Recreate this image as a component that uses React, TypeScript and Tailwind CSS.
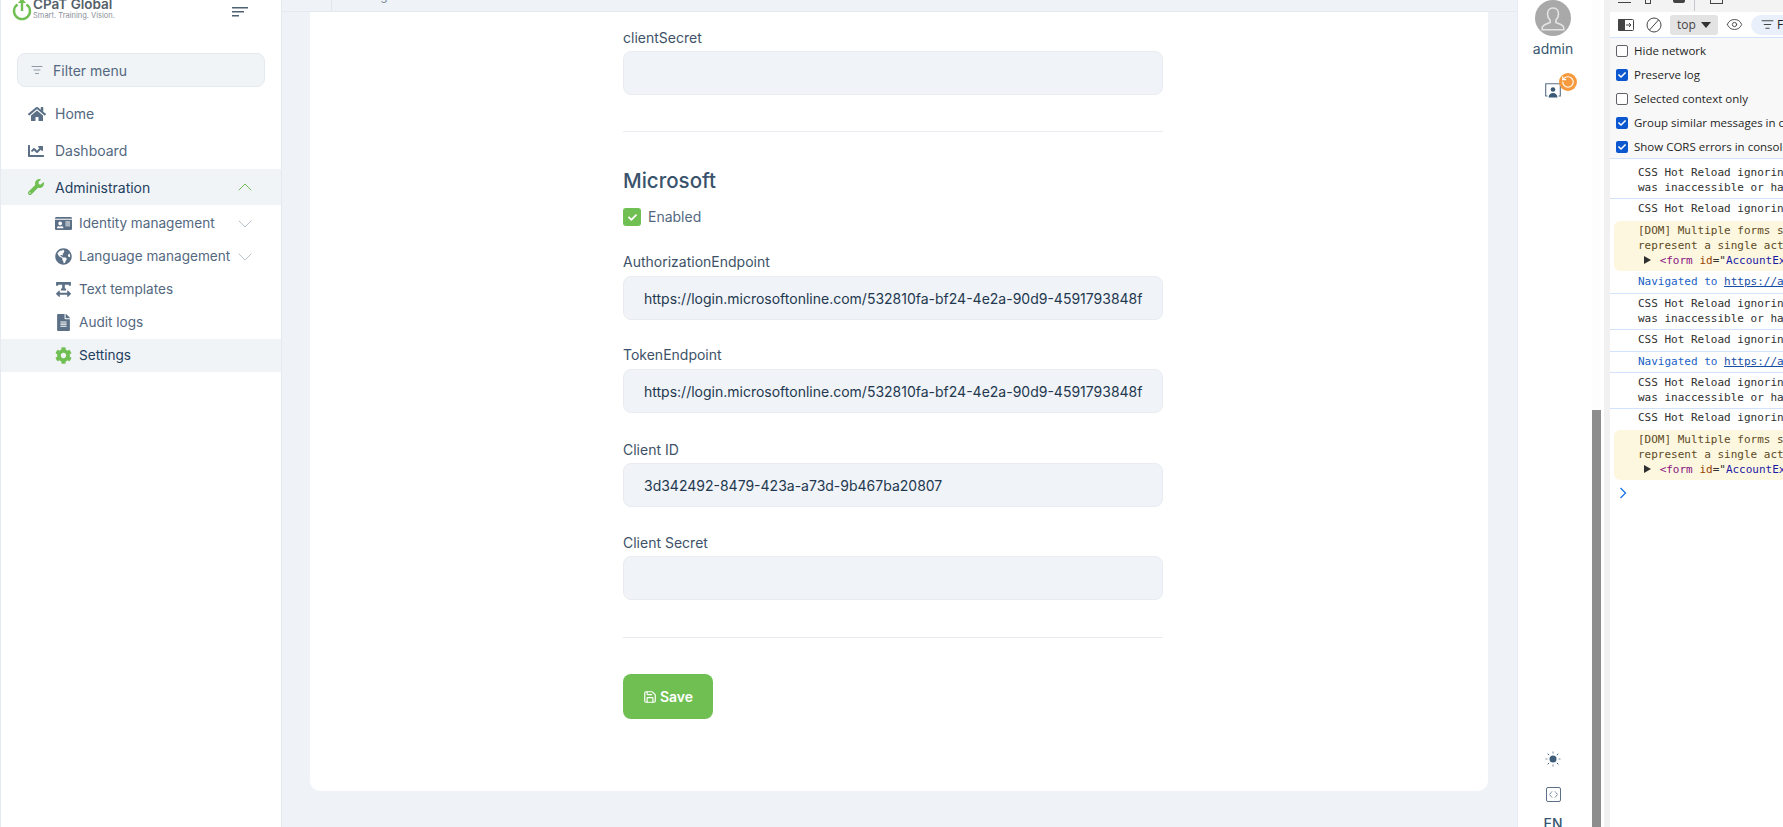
import { ChevronDown, ChevronUp, Eye, ListFilter, RotateCcw, Save } from "lucide-react";
import type { ComponentType, ReactNode } from "react";
import {
  FaChartLine,
  FaCheck,
  FaCog,
  FaFileAlt,
  FaGlobeAmericas,
  FaHome,
  FaIdCard,
  FaTextWidth,
  FaWrench,
} from "react-icons/fa";

const URL_VALUE =
  "https://login.microsoftonline.com/532810fa-bf24-4e2a-90d9-4591793848f";

const SubItem = ({
  icon: Icon,
  label,
  chevron,
  active,
}: {
  icon: ComponentType<{ className?: string }>;
  label: string;
  chevron?: boolean;
  active?: boolean;
}) => (
  <div
    className={`flex h-[33px] items-center pl-[54px] pr-[24px] ${active ? "bg-[#f1f4f7] text-[#23405f]" : "text-[#53687f]"}`}
  >
    <span className="flex w-[24px] justify-start">
      <Icon className={`h-[17px] w-[17px] ${active ? "text-[#70bf53]" : "text-[#5b7086]"}`} />
    </span>
    <span className="text-[13.6px] whitespace-nowrap">{label}</span>
    {chevron && <ChevronDown className="ml-auto h-[24px] w-[24px] shrink-0 text-[#b9c3ce]" strokeWidth={1} />}
  </div>
);

const Sidebar = () => (
  <aside className="w-[282px] shrink-0 border-x border-[#e5eaf0] bg-white">
    <div className="flex h-[24px] items-start overflow-hidden pl-[11px] pr-[33px]">
      <svg width="20" height="22" viewBox="0 0 20 22" className="mt-[-1px] shrink-0" fill="none" stroke="#70bf53">
        <path d="M5.5 5.5a8 8 0 1 0 9 0" strokeWidth="2.4" />
        <path d="M10 1v11" strokeWidth="2.4" />
        <path d="M6.5 4 10 0l3.5 4" fill="#70bf53" strokeWidth="1" />
      </svg>
      <div className="ml-[1px] mt-[-4px] font-['Inter',sans-serif]">
        <div className="text-[13.5px] leading-[16px] font-semibold text-[#555f69]">CPaT Global</div>
        <div className="mt-[-1px] text-[7.5px] leading-[10px] text-[#8a9199]">Smart. Training. Vision.</div>
      </div>
      <svg width="16" height="12" viewBox="0 0 16 12" className="ml-auto mt-[6px] shrink-0">
        <rect x="0" y="1" width="16" height="1.5" fill="#4e6074" />
        <rect x="0" y="5" width="12" height="1.5" fill="#4e6074" />
        <rect x="0" y="9" width="7" height="1.5" fill="#4e6074" />
      </svg>
    </div>

    <div className="mx-[16px] mt-[29px] flex h-[34px] items-center rounded-[8px] border border-[#e5eaf0] bg-[#f1f4f7] pl-[13px] text-[14px] text-[#53687f]">
      <ListFilter className="h-[12px] w-[12px] text-[#6b7d90]" strokeWidth={1.5} />
      <span className="ml-[10px]">Filter menu</span>
    </div>

    <nav className="mt-[8px]">
      <div className="flex h-[37px] items-center pl-[27px] text-[14px] text-[#53687f]">
        <span className="w-[27px]">
          <FaHome className="h-[18px] w-[18px] text-[#5b7086]" />
        </span>
        Home
      </div>
      <div className="flex h-[37px] items-center pl-[27px] text-[14px] text-[#53687f]">
        <span className="w-[27px]">
          <FaChartLine className="h-[16px] w-[16px] text-[#5b7086]" />
        </span>
        Dashboard
      </div>
      <div className="flex h-[36px] items-center bg-[#f1f4f7] pl-[27px] pr-[24px] text-[14px] text-[#23405f]">
        <span className="w-[27px]">
          <FaWrench className="h-[16px] w-[16px] text-[#70bf53]" />
        </span>
        Administration
        <ChevronUp className="ml-auto h-[24px] w-[24px] text-[#70bf53]" strokeWidth={1} />
      </div>
      <div className="pt-[2px]">
        <SubItem icon={FaIdCard} label="Identity management" chevron />
        <SubItem icon={FaGlobeAmericas} label="Language management" chevron />
        <SubItem icon={FaTextWidth} label="Text templates" />
        <SubItem icon={FaFileAlt} label="Audit logs" />
        <SubItem icon={FaCog} label="Settings" active />
      </div>
    </nav>
  </aside>
);

const Field = ({
  label,
  value,
  className,
  gap = "mt-[5px]",
}: {
  label: string;
  value?: string;
  className?: string;
  gap?: string;
}) => (
  <div className={className}>
    <div className="text-[14px] leading-[17px] text-[#3d5268]">{label}</div>
    <div
      className={`${gap} flex h-[44px] items-center overflow-hidden rounded-[8px] border border-[#e8ecf1] bg-[#f0f3f7] pl-[20px] text-[14px] whitespace-nowrap text-[#23384f]`}
    >
      {value}
    </div>
  </div>
);

const Main = () => (
  <main className="flex min-w-0 flex-1 flex-col bg-[#eff3f7]">
    <div className="flex h-[12px] shrink-0 overflow-hidden border-b border-[#e5eaf0] pl-[28px]">
      <div className="h-full w-[22px] border-r border-[#e1e6ec]" />
      <span className="mt-[-11px] pl-[16px] text-[12px] leading-[14px] text-[#7b8a9a]">Settings</span>
    </div>
    <div className="ml-[28px] mr-[29px] h-[779px] shrink-0 rounded-b-[10px] bg-white pl-[313px]">
      <div className="w-[540px]">
        <Field label="clientSecret" className="pt-[17px]" />
        <hr className="mt-[36px] border-[#e8ebef]" />
        <h2 className="mt-[35px] text-[20.5px] leading-[28px] font-medium text-[#3a536c]">Microsoft</h2>
        <div className="mt-[13px] flex items-center">
          <span className="flex h-[18px] w-[18px] items-center justify-center rounded-[3px] bg-[#70bf53]">
            <FaCheck className="h-[9px] w-[9px] text-white" />
          </span>
          <span className="ml-[7px] text-[14px] leading-[18px] text-[#53687f]">Enabled</span>
        </div>
        <Field label="AuthorizationEndpoint" value={URL_VALUE} className="mt-[27px]" gap="mt-[6px]" />
        <Field label="TokenEndpoint" value={URL_VALUE} className="mt-[26px]" gap="mt-[6px]" />
        <Field label="Client ID" value="3d342492-8479-423a-a73d-9b467ba20807" className="mt-[28px]" />
        <Field label="Client Secret" className="mt-[27px]" />
        <hr className="mt-[37px] border-[#e8ebef]" />
        <button className="mt-[36px] flex h-[45px] w-[90px] items-center justify-center gap-[3px] rounded-[8px] bg-[#70bf53] text-[14px] font-semibold text-white">
          <Save className="h-[14px] w-[14px]" strokeWidth={2} />
          Save
        </button>
      </div>
    </div>
  </main>
);

const RightBar = () => (
  <div className="flex w-[75px] shrink-0 flex-col items-center border-l border-[#e6ebf5] bg-white pr-[4px]">
    <div className="flex h-[36px] w-[36px] shrink-0 items-end justify-center overflow-hidden rounded-full bg-[#a9a9a9]">
      <svg width="26" height="28" viewBox="0 0 26 28" fill="none" stroke="#e4e4e4" strokeWidth="1.6" className="mb-[3px]">
        <path d="M13 3c-3.6 0-5.500 2.700-5.500 6 0 2.600 1 4.600 2.600 6v2.500c-2.500 1-6.600 2.200-7.600 4.300-.4 1-.3 2.200-.3 3h21.600c0-.8.1-2-.3-3-1-2.100-5.100-3.300-7.600-4.300V15c1.600-1.400 2.600-3.400 2.600-6 0-3.300-1.900-6-5.500-6Z" />
      </svg>
    </div>
    <span className="mt-[3px] shrink-0 text-[14px] leading-[20px] text-[#38566f]">admin</span>

    <div className="relative mt-[24px] h-[20px] w-[16px] shrink-0">
      <svg width="16" height="15" viewBox="0 0 16 15" fill="none">
        <path d="M2.500 13H.7V.7h14.600V13h-1.800" stroke="#5b7086" strokeWidth="1.100" />
        <circle cx="8" cy="6.500" r="2.300" fill="#3c5a75" />
        <path d="M3.500 14.500c.3-3 2-4.500 4.500-4.500s4.200 1.500 4.500 4.500Z" fill="#3c5a75" />
      </svg>
      <span className="absolute left-[14px] top-[-10px] flex h-[18px] w-[18px] items-center justify-center rounded-full bg-[#f79a3e]">
        <RotateCcw className="h-[14px] w-[14px] text-white" strokeWidth={2} />
      </span>
    </div>

    <svg width="16" height="16" viewBox="0 0 16 16" className="mt-[648px] shrink-0" stroke="#3f5d78">
      <circle cx="8" cy="8" r="3.500" fill="#3f5d78" stroke="none" />
      <path d="M8 .5v2M8 13.500v2M.5 8h2M13.500 8h2" strokeWidth="1.600" opacity=".45" />
      <path d="m2.700 2.700 1.400 1.400M11.900 11.900l1.400 1.400M2.700 13.300l1.400-1.400M11.900 4.100l1.400-1.400" strokeWidth="1" />
    </svg>

    <svg width="15" height="15" viewBox="0 0 15 15" fill="none" className="mt-[20px] shrink-0">
      <rect x=".5" y=".5" width="14" height="14" rx="1.500" stroke="#5b7086" />
      <path d="M6 4.500 3.500 7.500 6 10.500M9 4.500l2.500 3-2.500 3" stroke="#5b7086" strokeDasharray="1.500 .6" />
    </svg>

    <span className="mt-[12px] shrink-0 text-[14px] leading-[20px] font-medium text-[#38566f]">EN</span>
  </div>
);

const CheckRow = ({ label, checked }: { label: string; checked?: boolean }) => (
  <div className="flex h-[24px] items-center pl-[6px] text-[11.5px] whitespace-nowrap text-[#1f1f1f]">
    {checked ? (
      <span className="flex h-[12px] w-[12px] shrink-0 items-center justify-center rounded-[2px] bg-[#0b57d0]">
        <FaCheck className="h-[8px] w-[8px] text-white" />
      </span>
    ) : (
      <span className="h-[12px] w-[12px] shrink-0 rounded-[2px] border border-[#5f6368] bg-white" />
    )}
    <span className="ml-[6px]">{label}</span>
  </div>
);

const LogRow = ({ children, className }: { children: ReactNode; className?: string }) => (
  <div className={`border-b border-[#d3e3fd] pl-[28px] leading-[14.5px] whitespace-nowrap ${className ?? "py-[3px]"}`}>
    {children}
  </div>
);

const Warning = () => (
  <div className="ml-[4px] mt-[4px] rounded-l-[6px] bg-[#fef7e0] pb-[3px] pl-[24px] pt-[2px] leading-[15px] whitespace-nowrap text-[#5c4a1f]">
    <div>[DOM] Multiple forms should be contained</div>
    <div>represent a single action</div>
    <div className="pl-[6px] text-[#303030]">
      <span className="mr-[2px] inline-block h-0 w-0 border-y-[4px] border-l-[7px] border-y-transparent border-l-[#303030]" />{" "}
      <span className="text-[#881280]">&lt;form</span> <span className="text-[#994500]">id</span>="
      <span className="text-[#1a1aa6]">AccountExternalProviders</span>"
    </div>
  </div>
);

const Navigated = () => (
  <span className="text-[#1a5fc4]">
    Navigated to <span className="text-[#174ea6] underline">https://app.cpatglobal.com</span>
  </span>
);

const DevTools = () => (
  <div className="flex w-[173px] shrink-0 flex-col overflow-hidden bg-white font-['Open_Sans','Noto_Sans',sans-serif]">
    <div className="flex h-[12px] shrink-0 items-start overflow-hidden bg-[#f3f3f3] pl-[8px] text-[12px] text-[#555]">
      <span className="h-[3px] w-[15px] border-b border-[#444]" />
      <span className="ml-[14px] h-[4px] w-[6px] border-x border-b border-[#444]" />
      <span className="ml-[22px] h-[3px] w-[13px] rounded-b-[2px] bg-[#444]" />
      <span className="ml-[9px] h-[11px] border-l border-[#c4c7cc]" />
      <span className="ml-[15px] h-[4px] w-[15px] border-x border-b border-[#444]" />
      <span className="ml-[8px] mt-[-12px] leading-[14px] text-[#777]">Welcome</span>
    </div>
    <div className="flex h-[26px] shrink-0 items-center border-b border-[#d3e3fd] pl-[8px] text-[12px]">
      <svg width="16" height="12" viewBox="0 0 16 12" className="shrink-0">
        <rect x=".5" y=".5" width="15" height="11" rx="1" fill="#fff" stroke="#444" />
        <rect x="0" y="0" width="7" height="12" rx="1" fill="#444" />
        <path d="M8 6h5M11 4l2 2-2 2" stroke="#444" fill="none" />
      </svg>
      <svg width="16" height="16" viewBox="0 0 16 16" fill="none" stroke="#444" className="ml-[12px] shrink-0">
        <circle cx="8" cy="8" r="7" />
        <path d="m3.500 13 9-10" />
      </svg>
      <span className="ml-[8px] flex h-[20px] w-[48px] shrink-0 items-center justify-center gap-[5px] rounded-[3px] bg-[#e3e3e3] text-[#444]">
        top
        <span className="h-0 w-0 border-x-[5px] border-t-[6px] border-x-transparent border-t-[#333]" />
      </span>
      <Eye className="ml-[8px] h-[17px] w-[17px] shrink-0 text-[#444]" strokeWidth={1.3} />
      <span className="ml-[8px] flex h-[20px] flex-1 items-center rounded-l-[10px] bg-[#e9f0fb] pl-[10px] text-[#1f1f1f]">
        <ListFilter className="h-[13px] w-[13px] shrink-0 text-[#444]" />
        <span className="ml-[3px]">F</span>
      </span>
    </div>
    <div className="h-[121px] shrink-0 overflow-hidden border-b border-[#d3e3fd] bg-[#f8f8f8] pt-[1px]">
      <CheckRow label="Hide network" />
      <CheckRow label="Preserve log" checked />
      <CheckRow label="Selected context only" />
      <CheckRow label="Group similar messages in console" checked />
      <CheckRow label="Show CORS errors in console" checked />
    </div>
    <div className="font-['DejaVu_Sans_Mono',monospace] text-[11px] text-[#303030]">
      <LogRow className="pb-[3px] pt-[7px]">
        CSS Hot Reload ignoring stylesheet
        <br />
        was inaccessible or had no rules
      </LogRow>
      <div className="pl-[28px] pt-[3px] leading-[14.5px] whitespace-nowrap">CSS Hot Reload ignoring</div>
      <Warning />
      <LogRow className="py-[4px]">
        <Navigated />
      </LogRow>
      <LogRow>
        CSS Hot Reload ignoring stylesheet
        <br />
        was inaccessible or had no rules
      </LogRow>
      <LogRow>CSS Hot Reload ignoring stylesheet</LogRow>
      <LogRow>
        <Navigated />
      </LogRow>
      <LogRow>
        CSS Hot Reload ignoring stylesheet
        <br />
        was inaccessible or had no rules
      </LogRow>
      <div className="pl-[28px] pt-[2px] leading-[14.5px] whitespace-nowrap">CSS Hot Reload ignoring</div>
      <Warning />
      <svg width="8" height="12" viewBox="0 0 8 12" fill="none" stroke="#1a73e8" strokeWidth="1.3" className="ml-[9px] mt-[7px]">
        <path d="m1.500 1 5 5-5 5" />
      </svg>
    </div>
  </div>
);

export default function App() {
  return (
    <div className="flex h-[827px] w-[1783px] overflow-hidden bg-white font-['Inter',sans-serif]">
      <Sidebar />
      <Main />
      <RightBar />
      <div className="flex w-[9px] shrink-0 flex-col justify-end bg-[#fdfdfd]">
        <div className="h-[417px] bg-[#8d8d8d]" />
      </div>
      <div className="flex w-[9px] shrink-0 justify-end bg-white">
        <div className="w-[6px] bg-[#f1f1f1]" />
      </div>
      <DevTools />
    </div>
  );
}
